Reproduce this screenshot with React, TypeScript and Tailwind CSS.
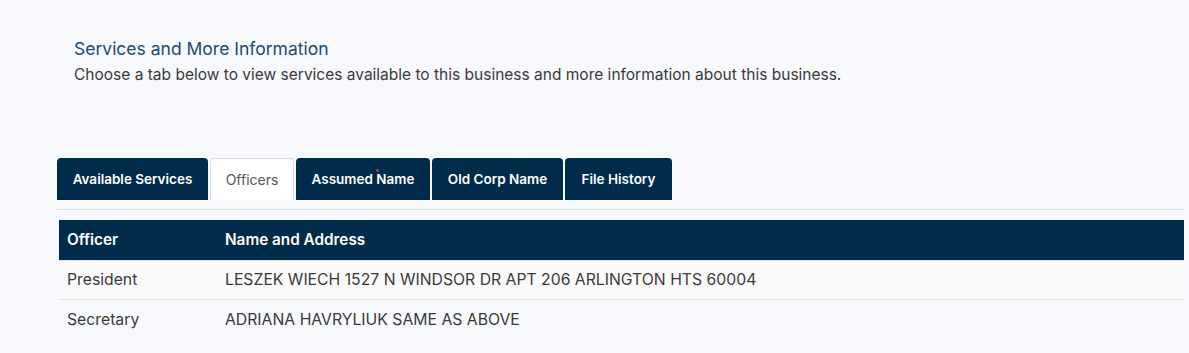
import { useState } from 'react'

const TABS = [
  { id: 'services', label: 'Available Services', width: 'w-[151px]' },
  { id: 'officers', label: 'Officers', width: 'w-[84px]' },
  { id: 'assumed', label: 'Assumed Name', width: 'w-[134px]' },
  { id: 'oldcorp', label: 'Old Corp Name', width: 'w-[131px]' },
  { id: 'history', label: 'File History', width: 'w-[107px]' },
]

const OFFICERS = [
  { title: 'President', name: 'LESZEK WIECH 1527 N WINDSOR DR APT 206 ARLINGTON HTS 60004' },
  { title: 'Secretary', name: 'ADRIANA HAVRYLIUK SAME AS ABOVE' },
]

export default function App() {
  const [active, setActive] = useState('officers')

  return (
    <div
      className="min-h-[353px] bg-[#f8f9fd] text-[#333] overflow-hidden"
      style={{ fontFamily: '"Inter", "Noto Sans", "Liberation Sans", sans-serif' }}
    >
      <div className="pl-[74px] pt-[38px]">
        <h2 className="text-[17.5px] leading-[22px] text-[#1b4a72]">Services and More Information</h2>
        <p className="mt-[5px] text-[15.5px] leading-[20px] text-[#3a3a3a]">
          Choose a tab below to view services available to this business and more information about this business.
        </p>
      </div>

      <div className="ml-[57px] mr-[5px] mt-[73px]">
        {/* Tabs */}
        <div className="flex gap-[2px] h-[42px] border-b border-[#dcdde0] box-content pb-[9px]">
          {TABS.map((tab) => {
            const isActive = tab.id === active
            return (
              <button
                key={tab.id}
                onClick={() => setActive(tab.id)}
                className={
                  'relative h-[42px] rounded-t-[4px] flex items-center justify-center ' +
                  tab.width +
                  (isActive
                    ? ' bg-white border border-b-0 border-[#dcdde0] text-[#555] font-normal text-[14px]'
                    : ' bg-[#012b4a] text-white font-semibold text-[13.5px]')
                }
              >
                {tab.label}
                {tab.id === 'assumed' && (
                  <span className="absolute left-[80px] top-[11px] w-[3px] h-[3px] rounded-full bg-[#e0262a]" />
                )}
              </button>
            )
          })}
        </div>

        {/* Officers table */}
        <div className="ml-[2px] mt-[10px]">
          <div className="flex h-[40px] items-center bg-[#012b4a] text-white font-semibold text-[15.3px]">
            <div className="w-[166px] pl-[8px]">Officer</div>
            <div>Name and Address</div>
          </div>
          {OFFICERS.map((o, i) => (
            <div
              key={o.title}
              className={
                'flex h-[40px] items-center text-[15.75px] text-[#3a3a3a] ' +
                (i === 0 ? 'bg-[#fafafa] border-t border-b border-[#dddddd]' : '')
              }
            >
              <div className="w-[166px] pl-[8px]">{o.title}</div>
              <div>{o.name}</div>
            </div>
          ))}
        </div>
      </div>
    </div>
  )
}
